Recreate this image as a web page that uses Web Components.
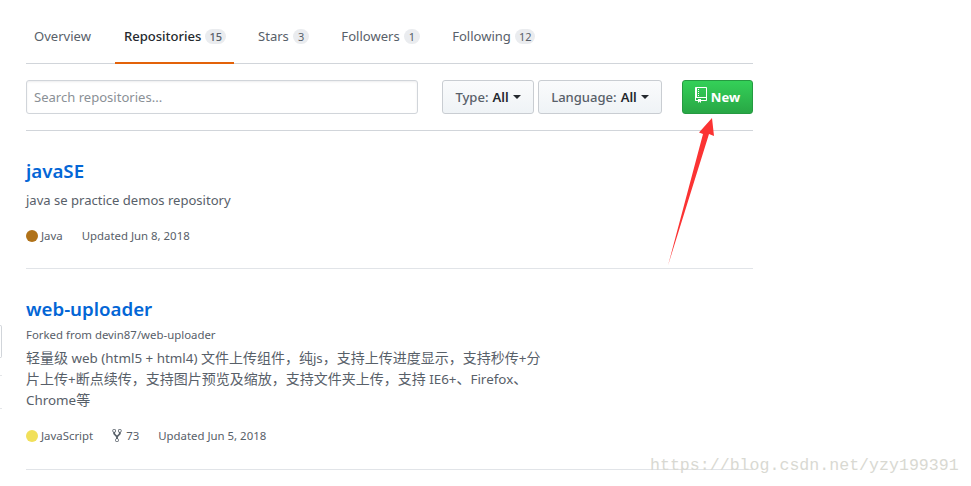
<!DOCTYPE html>
<html><head><meta charset="utf-8"><style>
html,body{margin:0;padding:0;background:#fff;}
body{width:971px;height:486px;overflow:hidden;position:relative;font-family:"Noto Sans","Noto Sans CJK SC",sans-serif;}
.z{font-size:14px;line-height:0;}
</style></head><body>
<template id="t-tabs"><style>
:host{display:flex;height:64px;margin-left:26px;width:727px;border-bottom:1px solid #d1d5da;box-sizing:border-box;align-items:flex-end;font-size:13.05px;color:#586069;}
a{display:flex;align-items:center;height:44px;padding:0 8px 10px;margin:0 16px -1px 0;box-sizing:border-box;border-bottom:2px solid transparent;white-space:nowrap;}
a:first-child{padding-left:7px;margin-right:17px;padding-right:7px;}
a.on{border-color:#e36209;color:#24292e;font-weight:500;padding-left:9px;}
i{font-style:normal;font-size:11px;background:#eaecef;border-radius:10px;padding:0 4px;min-width:16.5px;box-sizing:border-box;text-align:center;margin-left:4px;line-height:15px;color:#586069;}
</style><a>Overview</a><a class="on">Repositories<i>15</i></a><a>Stars<i>3</i></a><a>Followers<i>1</i></a><a>Following<i>12</i></a></template>
<template id="t-filter"><style>
:host{display:flex;align-items:center;width:727px;height:67px;margin-left:26px;border-bottom:1px solid #d1d5da;box-sizing:border-box;padding-bottom:1px;font-size:13.05px;}
.s{width:392px;height:34px;box-sizing:border-box;border:1px solid #d1d5da;border-radius:3px;padding-left:7px;color:#8a9096;display:flex;align-items:center;box-shadow:inset 0 1px 2px rgba(27,31,35,.075);}
.b{height:34px;box-sizing:border-box;border:1px solid #c9cdd2;border-radius:3px;background:linear-gradient(#fafbfc,#eff3f6);display:flex;align-items:center;justify-content:center;color:#24292e;font-weight:600;white-space:nowrap;}
.b span{color:#586069;margin-right:4px;font-weight:500;}
.c{width:0;height:0;border:4px solid transparent;border-top-color:#24292e;border-bottom:0;margin-left:4px;}
.n{height:34px;width:71px;box-sizing:border-box;border:1px solid #259a41;border-radius:3px;background:linear-gradient(#34d058,#28a745);display:flex;align-items:center;justify-content:center;color:#fff;font-weight:700;margin-left:20px;gap:4px;}
svg{display:block;margin-top:-4px;}
</style><div class="s">Search repositories...</div><div class="b" style="width:92px;margin-left:24px"><span>Type:</span>All<b class="c"></b></div><div class="b" style="width:124px;margin-left:4px"><span>Language:</span>All<b class="c"></b></div><div class="n"><svg width="12" height="16" viewBox="0 0 12 16" fill="#fff"><path fill-rule="evenodd" d="M4 9H3V8h1v1zm0-3H3v1h1V6zm0-2H3v1h1V4zm0-2H3v1h1V2zm8-1v12c0 .55-.45 1-1 1H6v2l-1.5-1.5L3 16v-2H1c-.55 0-1-.45-1-1V1c0-.55.45-1 1-1h10c.55 0 1 .45 1 1zm-1 10H1v2h2v-1h3v1h5v-2zm0-10H2v9h9V1z"/></svg>New</div></template>
<template id="t-repo"><style>
:host{display:block;width:727px;margin-left:26px;border-bottom:1px solid #e1e4e8;box-sizing:border-box;color:#586069;padding-top:27px;}
h3{margin:0;font-size:18.7px;line-height:26px;font-weight:600;color:#0366d6;}
.d{font-size:13.05px;line-height:21px;width:522px;}
.m{display:flex;align-items:center;font-size:11.4px;line-height:16px;}
</style><h3><slot name="name"></slot></h3><slot name="fork"></slot><div class="d"><slot name="desc"></slot></div><div class="m"><slot name="meta"></slot></div></template>
<template id="t-meta"><style>
:host{display:inline-flex;align-items:center;font-size:11.4px;color:#586069;white-space:nowrap;}
.dot{width:12px;height:12px;border-radius:50%;margin-right:3px;background:var(--c);}
</style><span class="dot"></span><slot></slot></template>
<template id="t-arrow"><style>:host{position:absolute;left:660px;top:110px;display:block;}svg{display:block;}</style><svg width="60" height="160" viewBox="660 110 60 160"><path d="M668 265.500L703 134L699 132.500L712 118L714 136L709 134Z" fill="#fb3333"/></svg></template>
<template id="t-mark"><style>:host{position:absolute;left:650px;top:456px;display:block;font:16.6px/20px "Liberation Mono","DejaVu Sans Mono",monospace;color:#d9d9d2;white-space:nowrap;}</style><slot></slot></template>
<template id="t-edge"><style>:host{position:absolute;left:0;top:325px;display:block;width:2px;height:84px;}
.b{width:2px;height:33px;box-sizing:border-box;border:1px solid #d1d5da;border-left:0;border-radius:0 3px 3px 0;}
.l{width:2px;height:1px;background:#e4e6e9;margin-top:17px;}.k{margin-top:32px;}</style><div class="b"></div><div class="l"></div><div class="l k"></div></template>
<script>
function def(n,t){customElements.define(n,class extends HTMLElement{constructor(){super();this.attachShadow({mode:"open"}).appendChild(document.getElementById(t).content.cloneNode(true));}});}
def("gh-tabs","t-tabs");def("gh-filter","t-filter");def("gh-repo","t-repo");def("gh-arrow","t-arrow");def("gh-mark","t-mark");def("gh-edge","t-edge");def("gh-lang","t-meta");
</script>
<gh-tabs></gh-tabs>
<gh-filter></gh-filter>
<gh-repo style="height:138px">
<span slot="name">javaSE</span>
<span slot="desc" style="display:block;margin-top:6px;margin-bottom:17px">java se practice demos repository</span>
<span slot="meta" style="display:flex;align-items:center"><gh-lang style="--c:#b07219">Java</gh-lang><span style="margin-left:19px">Updated Jun 8, 2018</span></span>
</gh-repo>
<gh-repo style="height:201px">
<span slot="name">web-uploader</span>
<span slot="fork" style="display:block;font-size:11.4px;line-height:16px;margin-top:5px">Forked from devin87/web-uploader</span>
<span slot="desc" style="display:block;margin-top:5px;margin-bottom:17px;font-size:13.4px"><span class="z">轻量级</span> web (html5 + html4) <span class="z">文件上传组件，纯</span>js<span class="z">，支持上传进度显示，支持秒传</span>+<span class="z">分</span><span class="z">片上传</span>+<span class="z">断点续传，支持图片预览及缩放，支持文件夹上传，支持</span> IE6+<span class="z">、</span>Firefox<span class="z">、</span>Chrome<span class="z">等</span></span>
<span slot="meta" style="display:flex;align-items:center"><gh-lang style="--c:#f1e05a">JavaScript</gh-lang><svg width="10" height="15" viewBox="0 0 10 16" style="margin:-2px 4px 0 19px;display:block" fill="#586069"><path fill-rule="evenodd" d="M8 1a1.993 1.993 0 0 0-1 3.72V6L5 8 3 6V4.72A1.993 1.993 0 0 0 2 1a1.993 1.993 0 0 0-1 3.72V6.5l3 3v1.78A1.993 1.993 0 0 0 5 15a1.993 1.993 0 0 0 1-3.72V9.5l3-3V4.72A1.993 1.993 0 0 0 8 1zM2 4.2C1.34 4.2.8 3.65.8 3c0-.65.55-1.2 1.2-1.2.65 0 1.2.55 1.2 1.2 0 .65-.55 1.2-1.2 1.2zm3 10c-.66 0-1.2-.55-1.2-1.2 0-.65.55-1.2 1.2-1.2.65 0 1.2.55 1.2 1.2 0 .65-.55 1.2-1.2 1.2zm3-10c-.66 0-1.2-.55-1.2-1.2 0-.65.55-1.2 1.2-1.2.65 0 1.2.55 1.2 1.2 0 .65-.55 1.2-1.2 1.2z"/></svg><span>73</span><span style="margin-left:19px">Updated Jun 5, 2018</span></span>
</gh-repo>
<gh-edge></gh-edge>
<gh-arrow></gh-arrow>
<gh-mark>https://blog.csdn.net/yzy199391</gh-mark>
</body></html>
